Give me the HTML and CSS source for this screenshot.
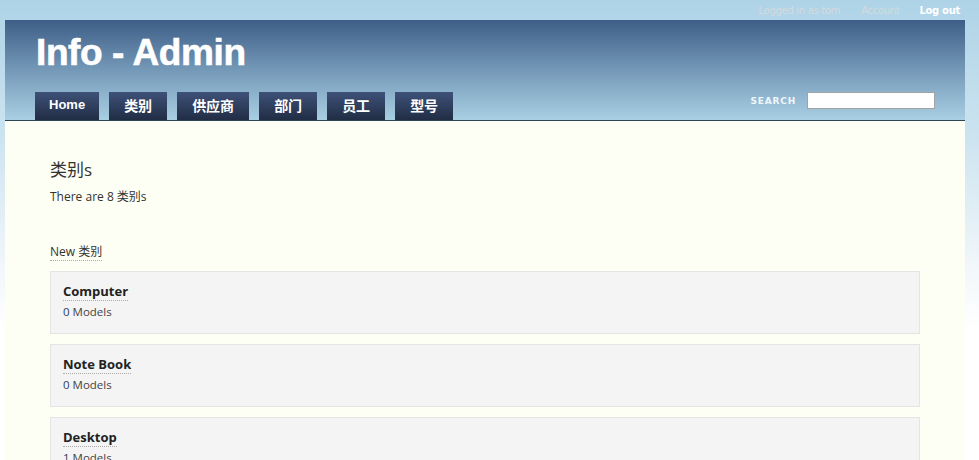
FILE: index.html
```html
<!DOCTYPE html>
<html>
<head>
<meta charset="utf-8">
<title>Info - Admin</title>
<link rel="stylesheet" href="styles.css">
</head>
<body>
<div class="topbar">
  <span class="user">Logged in as tom</span>
  <a class="toplink" href="#">Account</a>
  <a class="toplink logout" href="#">Log out</a>
</div>
<div class="page">
  <div class="header">
    <h1 class="title">Info - Admin</h1>
    <div class="navrow">
      <ul class="nav">
        <li><a class="tab tab-en" href="#">Home</a></li>
        <li><a class="tab" href="#">类别</a></li>
        <li><a class="tab" href="#">供应商</a></li>
        <li><a class="tab" href="#">部门</a></li>
        <li><a class="tab" href="#">员工</a></li>
        <li><a class="tab" href="#">型号</a></li>
      </ul>
      <form class="search">
        <label class="search-label">SEARCH</label>
        <input class="search-input" type="text">
      </form>
    </div>
  </div>
  <div class="content">
    <h2 class="heading">类别s</h2>
    <p class="count">There are 8 类别s</p>
    <p class="newlink"><a href="#">New 类别</a></p>
    <div class="card">
      <a class="card-title" href="#">Computer</a>
      <div class="card-meta"><span class="num">0</span> Models</div>
    </div>
    <div class="card">
      <a class="card-title" href="#">Note Book</a>
      <div class="card-meta"><span class="num">0</span> Models</div>
    </div>
    <div class="card">
      <a class="card-title" href="#">Desktop</a>
      <div class="card-meta"><span class="num">1</span> Models</div>
    </div>
  </div>
</div>
</body>
</html>
```
FILE: styles.css
```css
html, body {
  margin: 0;
  padding: 0;
}
html {
  height: 460px;
  overflow: hidden;
}
body {
  background: #ffffff linear-gradient(#aed3e7 0px, #cde4f0 140px, #f2f7fb 270px, #ffffff 330px) no-repeat;
  font-family: "Open Sans", "Noto Sans CJK SC", sans-serif;
  color: #333;
  height: 460px;
  overflow: hidden;
}
.topbar {
  height: 20px;
  display: flex;
  justify-content: flex-end;
  align-items: center;
  padding-right: 19px;
  font-family: "DejaVu Sans", "Noto Sans CJK SC", sans-serif;
  font-size: 10px;
  letter-spacing: -0.3px;
}
.user {
  color: #d3dade;
  margin-right: 21px;
}
.toplink {
  color: #d3dade;
  text-decoration: none;
  margin-right: 20px;
}
.toplink.logout {
  color: #ffffff;
  font-weight: bold;
  margin-right: 0;
}
.page {
  margin: 0 14px 0 5px;
  background: #fdfff5;
  height: 440px;
  overflow: hidden;
}
.header {
  background: linear-gradient(#3e5e87 0%, #6f93b3 45%, #a9cfe3 100%);
  border-bottom: 1px solid #2e4656;
  height: 100px;
  display: flex;
  flex-direction: column;
  justify-content: space-between;
}
.title {
  margin: 0;
  padding: 12px 0 0 31px;
  font-family: "Liberation Sans", Arial, sans-serif;
  font-size: 37px;
  font-weight: bold;
  letter-spacing: -0.4px;
  color: #ffffff;
  line-height: 42px;
  -webkit-text-stroke: 0.6px #ffffff;
}
.navrow {
  display: flex;
  justify-content: space-between;
  align-items: flex-end;
  padding-left: 30px;
  padding-right: 30px;
}
.nav {
  list-style: none;
  margin: 0;
  padding: 0;
  display: flex;
  gap: 10px;
}
.tab {
  display: block;
  height: 28px;
  line-height: 26px;
  padding: 0 15px;
  background: linear-gradient(#3e5178, #212d45);
  color: #ffffff;
  text-decoration: none;
  font-family: "Noto Sans CJK SC", sans-serif;
  font-size: 14px;
  font-weight: bold;
}
.tab-en {
  font-family: "Liberation Sans", Arial, sans-serif;
  font-size: 13px;
  padding: 0 14px;
}
.search {
  display: flex;
  align-items: center;
  gap: 11px;
  margin: 0 0 11px 0;
}
.search-label {
  font-family: "DejaVu Sans", sans-serif;
  font-size: 9px;
  font-weight: bold;
  letter-spacing: 0.8px;
  color: #eef6fa;
}
.search-input {
  width: 124px;
  height: 13px;
  padding: 1px;
  margin: 0;
  border: 1px solid #a2a2a2;
  background: #ffffff;
}
.content {
  padding: 37px 45px 10px 45px;
}
.heading {
  margin: 0;
  font-size: 17px;
  font-weight: normal;
  color: #333;
  line-height: 24px;
}
.count {
  margin: 6px 0 0 0;
  font-size: 12px;
  line-height: 18px;
  color: #333;
}
.newlink {
  margin: 37px 0 0 0;
  font-size: 12px;
  line-height: 18px;
}
.newlink a {
  color: #333;
  text-decoration: none;
  border-bottom: 1px dotted #aaa;
}
.card {
  margin-top: 10px;
  background: #f4f4f4;
  border: 1px solid #e4e4e4;
  height: 61px;
  padding: 0 12px;
  box-sizing: content-box;
}
.card-title {
  display: inline-block;
  margin-top: 11px;
  font-size: 13px;
  font-weight: bold;
  color: #222;
  text-decoration: none;
  border-bottom: 1px dotted #aaa;
  line-height: 17px;
}
.card-meta {
  margin-top: 2px;
  font-size: 11.5px;
  color: #444;
  line-height: 18px;
}
.num {
  color: #2b3f5c;
}
```
